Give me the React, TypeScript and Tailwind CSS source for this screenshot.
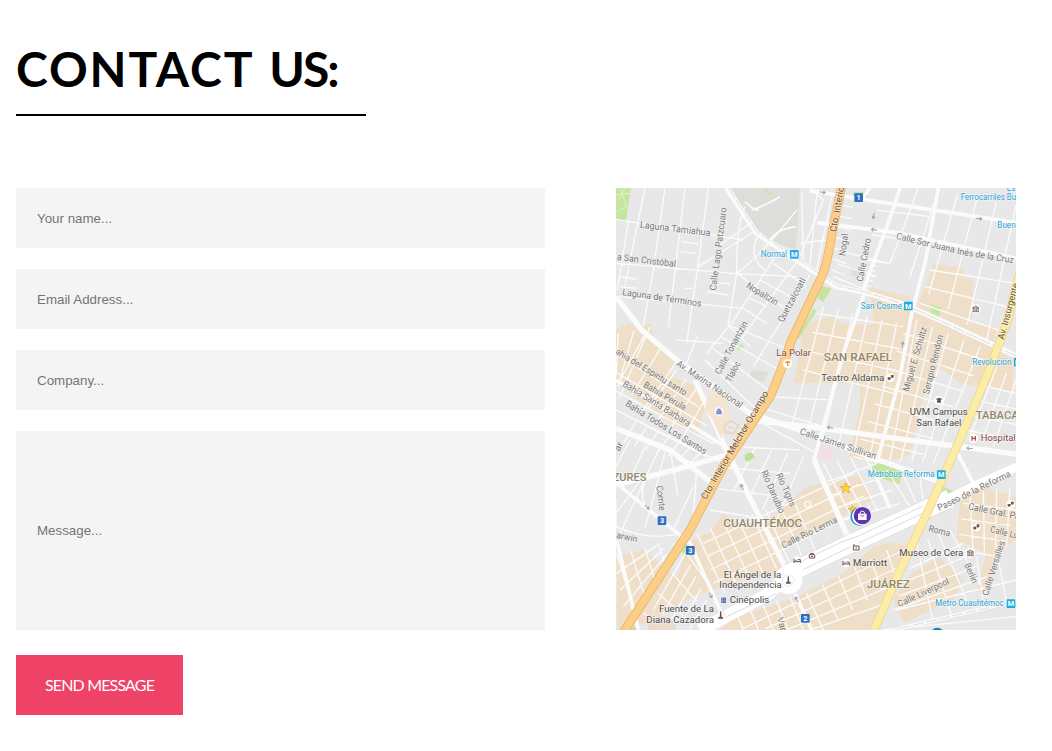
type Pt = [number, number];

const tan = [
  "18,448 50,432 125,432 130,470 150,500 205,540 180,562 186,590 250,615 290,655 265,765 200,740 100,672 18,610",
  "780,320 900,352 915,398 1000,430 1160,500 1135,580 1110,620 1050,610 985,560 940,645 900,825 862,838 715,838 750,680 750,610 550,610 565,540 580,435 680,405 690,430 790,435",
  "970,252 1060,262 1060,295 1090,300 1085,430 1160,440 1150,500 915,398",
  "1160,510 1215,540 1205,640 1120,610",
  "245,1080 300,1055 340,1000 410,1050 500,1000 590,920 745,885 790,960 640,1040 500,1120 520,1170 400,1200 250,1250 110,1330 20,1350 20,1130 100,1110 200,1190",
  "560,1250 700,1180 790,1100 850,1085 905,1100 880,1180 800,1350 330,1350 360,1320",
  "905,1180 990,1130 1060,1200 1030,1260 880,1330 850,1260",
  "1050,965 1100,915 1150,930 1218,950 1218,1080 1170,1110 1130,1240 1100,1230 1130,1120 1040,1080",
];

const parks = [
  "18,24 62,24 48,124 18,120",
  "462,24 485,40 478,48",
  "635,318 665,325 640,365 622,355",
  "610,385 620,392 568,475 562,472",
  "965,375 994,382 985,415 960,408",
  "796,840 880,868 868,912 780,885",
  "988,914 1035,935 1020,945 982,940",
  "225,1082 250,1128 218,1122 210,1105",
  "730,36 775,36 770,55 730,55",
  "380,498 395,493 402,502 385,510",
];

// Draws n evenly spread lines from the side a-b to the side c-d.
function hatch(a: Pt, b: Pt, c: Pt, d: Pt, n: number): string {
  const parts: string[] = [];
  for (let i = 0; i < n; i++) {
    const t = n === 1 ? 0 : i / (n - 1);
    const x1 = a[0] + (b[0] - a[0]) * t;
    const y1 = a[1] + (b[1] - a[1]) * t;
    const x2 = c[0] + (d[0] - c[0]) * t;
    const y2 = c[1] + (d[1] - c[1]) * t;
    parts.push(`M${x1.toFixed(1)},${y1.toFixed(1)}L${x2.toFixed(1)},${y2.toFixed(1)}`);
  }
  return parts.join("");
}

const minor = [
  "M105,24L40,340M165,24L130,270L100,440M225,24L175,440M295,24L265,250L230,490",
  "M55,125L22,330",
  "M18,118L400,180M18,250L370,280L560,290M30,350L400,385L470,430",
  "M215,185L265,192M210,215L260,220M30,290L80,297M30,320L80,325M225,325L250,325M300,305L360,312M290,335L355,345",
  "M405,80Q380,130 380,280L355,435L420,500M380,280Q450,230 560,90M330,195L420,130M265,260L440,150",
  "M380,280L530,390M420,355L470,380M450,300L560,360M490,250L590,320M445,165Q410,230 470,275",
  "M505,215L365,430M560,245L395,475M600,285L430,560",
  hatch([355, 435], [285, 540], [540, 510], [440, 690], 4),
  "M360,435L290,520M200,480L340,490M260,470L230,550",
  hatch([575, 40], [665, 50], [580, 240], [620, 270], 3),
  "M600,24L640,60L570,230M570,190L650,180",
  hatch([690, 75], [665, 270], [730, 82], [705, 285], 7),
  hatch([700, 215], [670, 290], [835, 250], [770, 330], 3),
  hatch([780, 255], [765, 315], [800, 258], [785, 320], 5),
  hatch([925, 24], [1218, 75], [840, 250], [1130, 480], 6),
  hatch([800, 90], [770, 240], [960, 110], [840, 250], 3),
  hatch([960, 270], [930, 370], [1218, 310], [1180, 455], 3),
  hatch([620, 400], [580, 570], [880, 440], [850, 640], 4),
  hatch([640, 380], [860, 430], [545, 740], [780, 830], 6),
  hatch([920, 420], [1110, 500], [840, 840], [970, 850], 5),
  hatch([880, 460], [730, 830], [1120, 540], [910, 870], 8),
  hatch([480, 650], [430, 715], [660, 660], [620, 820], 3),
  hatch([25, 460], [120, 440], [18, 590], [30, 650], 3),
  hatch([110, 455], [200, 545], [30, 600], [100, 690], 3),
  hatch([18, 520], [18, 690], [265, 680], [340, 850], 4),
  hatch([200, 570], [290, 650], [110, 690], [220, 770], 4),
  hatch([18, 690], [18, 745], [290, 830], [250, 850], 2),
  hatch([80, 720], [280, 810], [40, 790], [240, 850], 7),
  hatch([30, 1060], [290, 890], [150, 800], [200, 835], 4),
  hatch([18, 960], [250, 920], [18, 1040], [190, 1050], 3),
  "M60,780L18,860M110,790L60,900M110,890Q80,950 120,1000M18,1040Q120,1085 210,1060M260,870L250,1010M18,1000L100,890",
  hatch([20, 1120], [190, 1090], [75, 1300], [200, 1120], 5),
  hatch([20, 1180], [50, 1330], [150, 1090], [180, 1140], 4),
  hatch([380, 800], [300, 990], [570, 810], [480, 1020], 4),
  hatch([390, 790], [580, 830], [330, 900], [500, 1020], 5),
  hatch([260, 1060], [550, 960], [345, 1240], [615, 1110], 8),
  hatch([280, 1090], [310, 1210], [730, 880], [780, 980], 4),
  hatch([225, 1120], [290, 1260], [130, 1290], [240, 1345], 5),
  hatch([230, 1120], [100, 1300], [300, 1220], [180, 1350], 4),
  hatch([640, 850], [760, 820], [730, 1020], [840, 980], 4),
  hatch([640, 910], [700, 1020], [800, 850], [870, 970], 4),
  hatch([830, 870], [980, 910], [900, 980], [960, 960], 4),
  hatch([590, 1240], [830, 1110], [640, 1350], [860, 1200], 6),
  hatch([380, 1300], [540, 1250], [400, 1350], [580, 1350], 5),
  hatch([400, 1345], [600, 1350], [880, 1110], [830, 1270], 4),
  hatch([900, 1165], [850, 1290], [1060, 1090], [1130, 1190], 4),
  hatch([920, 1090], [1020, 1050], [970, 1330], [1130, 1250], 4),
  hatch([1060, 970], [1040, 1110], [1218, 990], [1170, 1130], 4),
  hatch([1080, 940], [1200, 920], [1090, 1130], [1190, 1100], 4),
  hatch([1160, 560], [1218, 600], [1080, 770], [1150, 800], 3),
  hatch([1130, 620], [1070, 750], [1218, 640], [1218, 780], 4),
  hatch([860, 1290], [820, 1350], [1218, 1200], [1218, 1310], 2),
  "M1100,1130L1120,1270M1160,1110L1190,1270",
].join("");

const medium =
  "M600,32L760,58L1218,128M622,128L860,158L1218,235M870,24L845,100L760,330M985,24L945,250L905,400L870,590L800,850M765,335L700,520L612,840" +
  "M790,870L840,985M1035,805L1095,920M18,600L120,660L345,800M18,905L50,935L190,1050L240,1090L330,1290L350,1330M20,1080L85,1350" +
  "M555,1240L605,1350M870,1345L1218,1262M780,24L750,65";

const major =
  "M18,350L95,450L200,540L420,700L560,747L800,838L1000,910M18,745L180,810L300,905M18,915L200,868L360,822M95,450L60,405" +
  "M255,600L345,800L410,935L540,1190M430,722L600,740L880,778L1218,822M612,840L720,1085M350,24L440,160L635,290L680,320L760,336L880,372L1000,425L1218,527";

interface Label {
  t: string;
  a: Pt;
  b: Pt;
  c?: string;
  s?: number;
  w?: number;
}

const street = "#777777";
const place = "#4c4a49";
const metro = "#2ba5d6";
const area = "#938767";

// a and b are the two ends of each label's baseline.
const labels: Label[] = [
  { t: "Laguna Tamiahua", a: [89, 143], b: [300, 168] },
  { t: "a San Cristóbal", a: [20, 240], b: [197, 261] },
  { t: "Laguna de Términos", a: [36, 345], b: [273, 380] },
  { t: "Calle Lago Patzcuaro", a: [318, 332], b: [350, 84] },
  { t: "Nopaltzin", a: [407, 322], b: [498, 377] },
  { t: "Quetzalcoatl", a: [519, 428], b: [588, 300] },
  { t: "Calle Tonantzin", a: [330, 585], b: [414, 430] },
  { t: "Tlaloc", a: [362, 608], b: [393, 550] },
  { t: "Av. Marina Nacional", a: [197, 555], b: [390, 685] },
  { t: "ahia del Espiritu santo", a: [14, 520], b: [224, 648] },
  { t: "Bahía Perula", a: [98, 620], b: [222, 692] },
  { t: "Bahía Santa Barbara", a: [36, 617], b: [235, 740] },
  { t: "Bahía Todos Los Santos", a: [44, 676], b: [283, 824] },
  { t: "Nogal", a: [706, 229], b: [714, 162] },
  { t: "Calle Cedro", a: [758, 306], b: [783, 177] },
  { t: "Calle Sor Juana", a: [857, 176], b: [1032, 219] },
  { t: "Inés de la Cruz", a: [1040, 222], b: [1210, 250] },
  { t: "Miguel E. Schultz", a: [896, 636], b: [951, 444] },
  { t: "Serapio Rendon", a: [956, 644], b: [1000, 467] },
  { t: "Calle James Sullivan", a: [568, 762], b: [795, 838] },
  { t: "Río Danubio", a: [453, 876], b: [508, 1002] },
  { t: "Río Tigris", a: [497, 884], b: [542, 982] },
  { t: "Comte", a: [139, 918], b: [148, 993] },
  { t: "arwin", a: [18, 1074], b: [80, 1087] },
  { t: "ar", a: [28, 816], b: [40, 792] },
  { t: "Calle Río Lerma", a: [520, 1106], b: [684, 1026] },
  { t: "Paseo de la Reforma", a: [988, 993], b: [1204, 888] },
  { t: "Calle Gral. Pr", a: [1074, 988], b: [1222, 1018] },
  { t: "Calle Lu", a: [1139, 1056], b: [1222, 1076] },
  { t: "Roma", a: [954, 1054], b: [1018, 1070] },
  { t: "Berlín", a: [1062, 1154], b: [1088, 1212] },
  { t: "Calle Versalles", a: [1134, 1249], b: [1185, 1086] },
  { t: "Calle Liverpool", a: [868, 1282], b: [1020, 1210] },
  { t: "Var", a: [501, 1315], b: [512, 1354] },
  { t: "Cto. Interior", a: [678, 157], b: [704, 12], c: "#70502f" },
  { t: "Cto. Interior Melchor Ocampo", a: [288, 960], b: [476, 640], c: "#70502f" },
  { t: "Av. Insurgente", a: [1181, 480], b: [1226, 312], c: "#70502f" },
  { t: "La Polar", a: [499, 527], b: [603, 527], c: "#87494a" },
  { t: "Hospital", a: [1112, 784], b: [1217, 784], c: "#87494a" },
  { t: "Teatro Aldama", a: [634, 602], b: [823, 602], c: place },
  { t: "UVM Campus", a: [899, 704], b: [1073, 704], c: place },
  { t: "San Rafael", a: [919, 737], b: [1054, 737], c: place },
  { t: "El Ángel de la", a: [341, 1193], b: [514, 1193], c: place },
  { t: "Independencia", a: [328, 1225], b: [515, 1225], c: place },
  { t: "Cinépolis", a: [359, 1269], b: [478, 1269], c: place },
  { t: "Fuente de La", a: [147, 1296], b: [312, 1296], c: place },
  { t: "Diana Cazadora", a: [109, 1329], b: [312, 1329], c: place },
  { t: "Marriott", a: [729, 1157], b: [831, 1157], c: place },
  { t: "Museo de Cera", a: [868, 1128], b: [1060, 1128], c: place },
  { t: "Normal", a: [452, 232], b: [531, 232], c: metro, s: 25 },
  { t: "San Cosme", a: [752, 386], b: [876, 386], c: metro, s: 25 },
  { t: "Revolución", a: [1087, 554], b: [1204, 554], c: metro, s: 25 },
  { t: "Metrobus Reforma", a: [773, 892], b: [974, 892], c: metro, s: 25 },
  { t: "Metro Cuauhtémoc", a: [976, 1279], b: [1181, 1279], c: metro, s: 25 },
  { t: "Ferrocarriles Bu", a: [1052, 61], b: [1218, 61], c: metro, s: 25 },
  { t: "Buen", a: [1162, 145], b: [1217, 145], c: metro, s: 25 },
  { t: "Es", a: [1190, 32], b: [1216, 32], c: metro, s: 25 },
  { t: "SAN RAFAEL", a: [641, 543], b: [847, 543], c: area, s: 31, w: 500 },
  { t: "TABACA", a: [1097, 718], b: [1226, 718], c: area, s: 31, w: 500 },
  { t: "CUAUHTÉMOC", a: [340, 1041], b: [577, 1041], c: area, s: 31, w: 500 },
  { t: "JUÁREZ", a: [770, 1224], b: [900, 1224], c: area, s: 31, w: 500 },
  { t: "ZURES", a: [8, 903], b: [109, 903], c: area, s: 31, w: 500 },
];

function MapLabel({ t, a, b, c = street, s = 28, w = 400 }: Label) {
  const dx = b[0] - a[0];
  const dy = b[1] - a[1];
  const angle = (Math.atan2(dy, dx) * 180) / Math.PI;
  return (
    <text
      transform={`translate(${a[0]} ${a[1]}) rotate(${angle.toFixed(2)})`}
      textLength={Math.hypot(dx, dy).toFixed(1)}
      lengthAdjust="spacingAndGlyphs"
      fontSize={s}
      fontWeight={w}
      fill={c}
      stroke="#ffffff"
      strokeOpacity={0.5}
      strokeWidth={4}
      paintOrder="stroke"
    >
      {t}
    </text>
  );
}

function Badge({ x, y, t, fill }: { x: number; y: number; t: string; fill: string }) {
  return (
    <g>
      <rect x={x - 13} y={y - 13} width={26} height={26} rx={2} fill={fill} />
      <text x={x} y={y + 8} textAnchor="middle" fontSize={22} fontWeight={700} fill="#fff">
        {t}
      </text>
    </g>
  );
}

function Arrow({ x, y, r }: { x: number; y: number; r: number }) {
  return (
    <path
      d="M-10,0H8M1,-5L8,0L1,5"
      transform={`translate(${x} ${y}) rotate(${r})`}
      fill="none"
      stroke="#9a9fc4"
      strokeWidth={3}
    />
  );
}

function Museum({ x, y }: { x: number; y: number }) {
  return (
    <g transform={`translate(${x} ${y})`}>
      <circle r={15} fill="#fff" />
      <path
        d="M-10,-3L0,-9L10,-3ZM-7,-2V6M-2,-2V6M3,-2V6M8,-2V6M-10,8H10"
        fill="none"
        stroke="#6f5350"
        strokeWidth={2.5}
      />
    </g>
  );
}

function Masks({ x, y }: { x: number; y: number }) {
  return (
    <g transform={`translate(${x} ${y})`}>
      <circle r={13} fill="#fff" />
      <path d="M-9,-1H0V5Q-4,10 -9,5ZM1,-8H9V-1Q5,4 1,-1Z" fill="#6f5350" />
    </g>
  );
}

function Monument({ x, y, r }: { x: number; y: number; r: number }) {
  return (
    <g transform={`translate(${x} ${y})`}>
      <circle r={r} fill="#fff" stroke="#dedede" strokeWidth={2} />
      <path d="M-1.5,-12H1.5L3,5H7V10H-7V5H-3Z" fill="#6f5350" />
    </g>
  );
}

function Bed({ x, y }: { x: number; y: number }) {
  return (
    <g transform={`translate(${x} ${y})`}>
      <circle r={13} fill="#fff" />
      <path d="M-10,-6V7M-10,3H10V7M-6,-1H-2M1,-3H9V3" fill="none" stroke="#6f5350" strokeWidth={3} />
    </g>
  );
}

function StreetMap() {
  return (
    <svg
      viewBox="18 24 1200 1326"
      className="block h-[442px] w-[400px] shrink-0 font-['Roboto',sans-serif]"
      role="img"
      aria-label="Map"
    >
      <rect x={18} y={24} width={1200} height={1326} fill="#e8e8e8" />
      <path d="M365,24H570L558,208L495,190L440,150L385,60Z" fill="#dddeda" />
      <path d="M425,570L475,575L460,608L418,595ZM725,262L750,265L745,290L722,285Z" fill="#dddeda" />
      {tan.map((p) => (
        <polygon key={p} points={p} fill="#f0dfc8" />
      ))}
      <path d="M625,795L672,800L660,845L618,835Z" fill="#f2dfe6" />
      {parks.map((p) => (
        <polygon key={p} points={p} fill="#c5e5a0" />
      ))}
      <circle cx={72} cy={1350} r={10} fill="#b9e298" />

      <g fill="none" stroke="#fbfbfb" strokeLinejoin="round">
        <path d={minor} strokeWidth={4} />
        <path d="M18,45L60,40M30,24L50,80L20,95M45,24L25,60" stroke="#e2f3cc" strokeWidth={3} />
        <path d="M445,92Q420,82 405,65M425,90Q460,80 510,50M558,140Q490,150 475,190" strokeWidth={5} />
        <circle cx={593} cy={973} r={9} strokeWidth={4} />
        <path d={medium} strokeWidth={11} />
        <path d={major} strokeWidth={16} />
      </g>
      <path d="M404,838Q402,819 420,818Q433,820 434,832L412,846Z" fill="#b9e298" />

      <path d="M290,655L310,635L325,642L328,630L355,655L345,690L365,705L348,730L335,778L305,715L285,690Z" fill="#f3e5d0" />
      <path d="M342,738L362,722L385,735L370,762L345,755ZM355,740L370,745" fill="none" stroke="#ead8bf" strokeWidth={6} />

      <g fill="none" stroke="#bdbdbd" strokeWidth={1.5}>
        <path d="M355,24L440,155L635,286L680,317L760,334L880,372L1000,426L1218,528" strokeDasharray="38 5" />
        <path d="M870,1345L1218,1263" strokeDasharray="34 6" />
      </g>

      <g fill="none" strokeLinejoin="round">
        <path d="M1222,860L1110,910L985,970" stroke="#fff" strokeWidth={26} />
        <path d="M535,1190L470,1245L350,1308L270,1350" stroke="#fff" strokeWidth={38} />
        <path d="M1010,960L720,1092L535,1180" stroke="#dadada" strokeWidth={58} />
        <path d="M1020,955L720,1092L535,1180" stroke="#fff" strokeWidth={54} />
        <path d="M960,990L740,1092L580,1168M940,978L745,1068L690,1088L570,1146M500,1240L350,1310" stroke="#dcdcdc" strokeWidth={3} />
        <circle cx={535} cy={1200} r={42} fill="#fff" />
        <path d="M1232,270L1190,430L1130,590L1040,800L960,980L880,1150L788,1360" stroke="#e8d383" strokeWidth={26} />
        <path d="M1232,270L1190,430L1130,590L1040,800L960,980L880,1150L788,1360" stroke="#fdeca5" strokeWidth={22} />
        <path d="M696,14L668,150Q650,260 635,290L545,480Q500,610 480,650L340,860L240,1050L35,1365" stroke="#e6b36a" strokeWidth={27} />
        <path d="M696,14L668,150Q650,260 635,290L545,480Q500,610 480,650L340,860L240,1050L35,1365" stroke="#fdce85" strokeWidth={22} />
      </g>

      <circle cx={155} cy={1353} r={42} fill="#eadccb" stroke="#dcc9ae" strokeWidth={2} strokeDasharray="4 3" />
      <Arrow x={638} y={37} r={8} />
      <Arrow x={1108} y={116} r={8} />
      <Arrow x={791} y={108} r={100} />
      <Arrow x={792} y={149} r={188} />
      <Arrow x={878} y={494} r={-80} />
      <Arrow x={660} y={743} r={188} />
      <Arrow x={1078} y={805} r={184} />
      <Arrow x={396} y={921} r={-115} />
      <Arrow x={112} y={982} r={42} />
      <Arrow x={302} y={1246} r={62} />
      <Arrow x={560} y={1258} r={-115} />

      {labels.map((l) => (
        <MapLabel key={l.t} {...l} />
      ))}

      <Badge x={746} y={53} t="1" fill="#2e6fc5" />
      <Badge x={156} y={1022} t="3" fill="#2e6fc5" />
      <Badge x={241} y={1111} t="3" fill="#2e6fc5" />
      <Badge x={586} y={1315} t="2" fill="#2e6fc5" />
      <Badge x={553} y={223} t="M" fill="#1aaee5" />
      <Badge x={895} y={378} t="M" fill="#1aaee5" />
      <Badge x={1225} y={546} t="M" fill="#1aaee5" />
      <Badge x={994} y={884} t="M" fill="#1aaee5" />
      <Badge x={1203} y={1271} t="M" fill="#1aaee5" />

      <Museum x={1097} y={387} />
      <Museum x={1081} y={1119} />
      <Masks x={842} y={593} />
      <Masks x={1202} y={973} />
      <Masks x={1099} y={1041} />
      <Bed x={562} y={1142} />
      <Bed x={709} y={1149} />
      <Monument x={535} y={1201} r={17} />
      <Monument x={332} y={1306} r={12} />

      <circle cx={533} cy={551} r={14} fill="#fff" />
      <path d="M526,544H540V549H535V558H531V549H526Z" fill="#ef9440" />
      <circle cx={327} cy={695} r={13} fill="#fff" />
      <path d="M320,693H334V702H320ZM323,692V687H331V692" fill="#8b97d6" stroke="#6a79c9" strokeWidth={2} />
      <circle cx={987} cy={661} r={14} fill="#fff" />
      <path d="M977,657L987,653L998,657L987,662ZM981,661H993V668H981Z" fill="#6f5350" />
      <circle cx={1091} cy={775} r={14} fill="#fff" />
      <path d="M1086,768V782M1096,768V782M1086,775H1096" stroke="#b0403d" strokeWidth={3.5} />
      <circle cx={606} cy={1128} r={13} fill="#fff" />
      <path d="M598,1124H614V1134H598ZM602,1123V1120H610V1123M603,1129H609" fill="none" stroke="#6f5350" strokeWidth={3} />
      <circle cx={738} cy={1102} r={15} fill="#fff" />
      <path d="M730,1098H747V1110H730ZM729,1095H735M736,1104H741" fill="none" stroke="#6f5350" strokeWidth={3} />
      <path d="M334,1253H348V1269H334Z" fill="#5a67b4" />
      <path d="M338,1253V1269M344,1253V1269M334,1261H348" stroke="#a5adde" strokeWidth={1.5} />

      <path d="M707,909L711.5,920H723L714,927.5L718,939L707,932L696,939L700,927.5L691,920H702.5Z" fill="#fedc26" stroke="#d99a2b" strokeWidth={2} />
      <path d="M727,976L731,985L738,981L733,993L722,999L724,989L714,985L724,985Z" fill="#f6cd33" stroke="#d99a2b" strokeWidth={1.5} />
      <circle cx={748} cy={1010} r={27} fill="#1c95c9" />
      <circle cx={753} cy={1009} r={27} fill="#fff" />
      <circle cx={757} cy={1007} r={26} fill="#6134af" />
      <path d="M744,1001H770V1020H744Z" fill="#fff" />
      <path d="M750,1002Q750,993 757,993Q764,993 764,1002" fill="none" stroke="#fff" strokeWidth={3} />
      <path d="M751,1005Q757,1014 763,1005" fill="none" stroke="#6134af" strokeWidth={2.5} />
      <circle cx={982} cy={1364} r={21} fill="#1686bd" />
    </svg>
  );
}

const field =
  "block w-full bg-[#f4f4f4] px-[21px] font-['Liberation_Sans',sans-serif] text-[13.333px] text-black outline-none placeholder:text-[#757575]";

export default function App() {
  return (
    <main className="h-[751px] overflow-hidden bg-white px-4 pt-[39px]">
      <header className="flex h-[77px] w-[350px] items-start border-b-2 border-black">
        <h1 className="flex gap-[15px] whitespace-nowrap font-['Lato',sans-serif] text-[48px] leading-[60px] font-bold text-black">
          <span className="tracking-[1.9px]">CONTACT</span>
          <span className="tracking-[-2px]">US:</span>
        </h1>
      </header>
      <div className="mt-[72px] flex items-start gap-[71px]">
        <form className="flex w-[529px] shrink-0 flex-col" onSubmit={(e) => e.preventDefault()}>
          <div className="flex flex-col gap-[21px]">
            <input className={`${field} h-[60px]`} type="text" placeholder="Your name..." />
            <input className={`${field} h-[60px]`} type="email" placeholder="Email Address..." />
            <input className={`${field} h-[60px]`} type="text" placeholder="Company..." />
            <input className={`${field} h-[199px]`} type="text" placeholder="Message..." />
          </div>
          <button
            type="submit"
            className="mt-[25px] h-[60px] w-[167px] bg-[#ef4267] font-['Lato',sans-serif] text-[16px] tracking-[-0.83px] whitespace-nowrap text-white"
          >
            SEND MESSAGE
          </button>
        </form>
        <StreetMap />
      </div>
    </main>
  );
}
